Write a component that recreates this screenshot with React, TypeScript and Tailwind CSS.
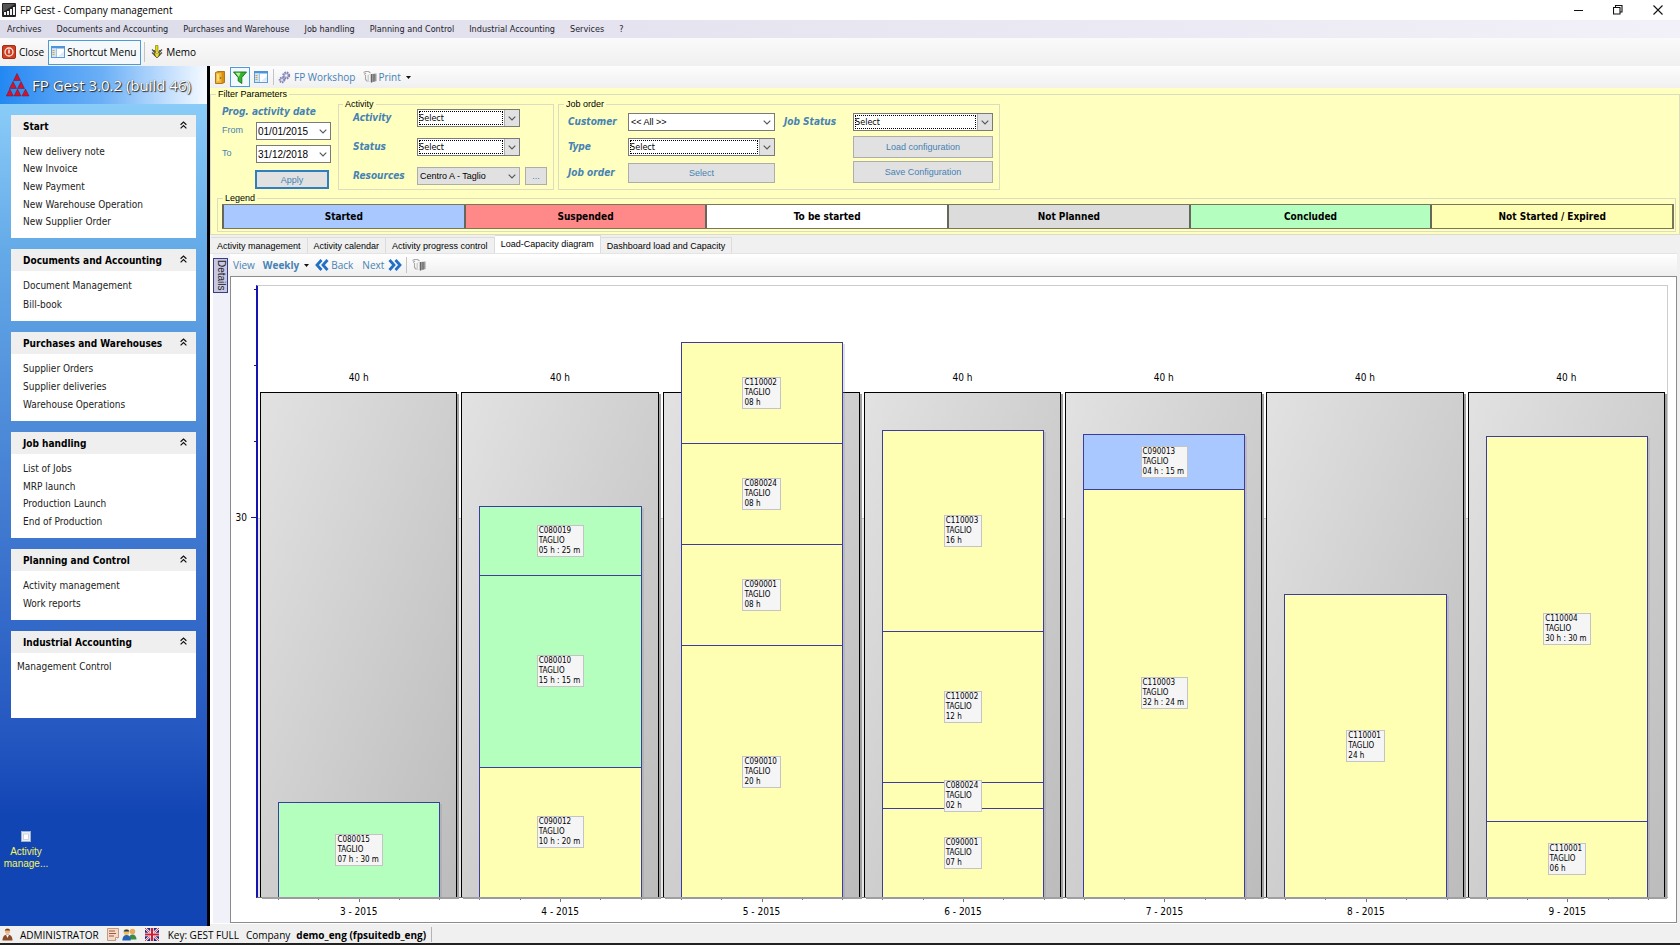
import React from "react";

const TAHOMA = "font-['DejaVu_Sans_Condensed','DejaVu_Sans',sans-serif]";
const SEGOE = "font-['Open_Sans','Noto_Sans',sans-serif]";
const SANS = "font-['Liberation_Sans',Arial,sans-serif]";

/* ---------- icons ---------- */

const AppIcon = () => (
  <svg width="14" height="14" viewBox="0 0 14 14">
    <rect width="14" height="14" rx="1" fill="#222" />
    <path d="M1 1h12L1 9z" fill="#555" />
    <path d="M2 12V9h2v3zM5 12V8h2v4zM8 12V6h2v6zM11 12V4h2v8z" fill="#f2f2f2" />
  </svg>
);
const PowerIcon = () => (
  <svg width="14" height="14" viewBox="0 0 14 14">
    <rect x=".5" y=".5" width="13" height="13" rx="1.5" fill="#cf3f22" stroke="#a52c14" />
    <circle cx="7" cy="7" r="4" fill="none" stroke="#fbe3dc" strokeWidth="1.3" />
    <path d="M7 4.6v4" stroke="#fff" strokeWidth="1.4" />
  </svg>
);
const PanelIcon = () => (
  <svg width="14" height="12" viewBox="0 0 14 12">
    <rect x=".5" y=".5" width="13" height="11" fill="#fff" stroke="#5b9bd8" />
    <rect x="0" y="0" width="14" height="2.5" fill="#4b95dd" />
    <rect x="1" y="2.5" width="4" height="8.5" fill="#cfe5f8" />
    <path d="M1.5 4.5h2M1.5 6.5h2M1.5 8.5h2" stroke="#e0a030" />
    <path d="M5.5 2v9" stroke="#9cc4ea" />
    <path d="M7 10.5h6V5z" fill="#dcebfa" />
  </svg>
);
const MemoIcon = () => (
  <svg width="12" height="14" viewBox="0 0 12 14">
    <path d="M4.500.5h2.500v6H4.500z" fill="#e8d800" stroke="#777700" strokeWidth=".6" />
    <path d="M1 4.500l4 4M11 4.500L7 8.500M1 7.500l4 4M11 7.500l-4 4" stroke="#555" strokeWidth="1.300" />
    <path d="M3 5l3 4 3-4-.5 5L6 13l-2.500-3z" fill="#d2c800" stroke="#333" strokeWidth=".7" />
    <path d="M6 6v6" stroke="#fff36b" />
  </svg>
);
const DoorIcon = () => (
  <svg width="10" height="13" viewBox="0 0 10 13">
    <path d="M.5 1.5L3 .5h6.5v11L7 12.5H.5z" fill="#d98f10" stroke="#9a6508" strokeWidth=".8" />
    <path d="M1 1.8h5.5v10H1z" fill="#f3b93a" />
    <path d="M2 3h2v7H2z" fill="#fbdc86" />
    <circle cx="5.6" cy="7" r=".8" fill="#7a4d00" />
  </svg>
);
const FunnelIcon = () => (
  <svg width="14" height="13" viewBox="0 0 14 13">
    <path d="M.5 1h13L8.8 6.5v6L5.2 10V6.5z" fill="#35b52c" stroke="#14701a" strokeWidth=".9" />
    <path d="M2.5 1.8h5L5.8 6z" fill="#b7efa8" />
  </svg>
);
const GearsIcon = () => (
  <svg width="13" height="13" viewBox="0 0 13 13">
    <circle cx="8.2" cy="4.5" r="3" fill="#b9b9dc" stroke="#8585b5" strokeWidth="2" strokeDasharray="1.5 .9" />
    <circle cx="4" cy="9" r="2.4" fill="#b9b9dc" stroke="#8585b5" strokeWidth="1.8" strokeDasharray="1.3 .8" />
    <circle cx="8.2" cy="4.5" r="1" fill="#fff" />
    <circle cx="4" cy="9" r=".8" fill="#fff" />
  </svg>
);
const PrintIcon = () => (
  <svg width="14" height="12" viewBox="0 0 14 12">
    <path d="M.5 1.500l2-1h3l2 1.500M1 3.500l2-1.500M2.500 4v4.500l2 2" fill="none" stroke="#a8a8a8" strokeWidth="1.100" />
    <path d="M4.500 4l4-1v8.500l-4-1z" fill="#cfcfcf" />
    <path d="M8.500 3l5-.500v7.500l-5 1.500z" fill="#999" />
    <path d="M6.500 4v6.500" stroke="#f5f5f5" />
    <path d="M8.500 3v8.500M11 3v7.500" stroke="#666" />
  </svg>
);
const LogoIcon = () => (
  <svg width="24" height="24" viewBox="0 0 24 24">
    <g fill="#d3122d" stroke="#5d1c3a" strokeWidth=".5">
      <path d="M11 .500l3.500 7h-7z" />
      <path d="M7 8.500l3.500 7h-7zM15 8.500l3.500 7h-7z" />
      <path d="M3.800 16l3.500 7h-7zM11.500 16l3.500 7H8zM19.500 16l3.500 7h-7z" />
    </g>
  </svg>
);
const Chevron = () => (
  <svg width="8" height="5" viewBox="0 0 8 5">
    <path d="M.7.7L4 4 7.300.7" fill="none" stroke="#555" strokeWidth="1.1" />
  </svg>
);
const Caret = () => (
  <svg width="5" height="3" viewBox="0 0 5 3">
    <path d="M0 0h5L2.500 3z" fill="#111" />
  </svg>
);
const CollapseIcon = () => (
  <svg width="7" height="8" viewBox="0 0 7 8">
    <path d="M.6 3.800L3.500 1l2.900 2.800M.6 7.400L3.500 4.600l2.900 2.800" fill="none" stroke="#111" strokeWidth="1.200" />
  </svg>
);
const DoubleArrow = ({ flip = false }: { flip?: boolean }) => (
  <svg width="14" height="12" viewBox="0 0 14 12" className={flip ? "rotate-180" : ""}>
    <path d="M6.500 1L2 6l4.500 5M12.500 1L8 6l4.500 5" fill="none" stroke="#2270c4" strokeWidth="2.800" />
  </svg>
);
const UserIcon = () => (
  <svg width="11" height="13" viewBox="0 0 11 13">
    <circle cx="5.500" cy="3.200" r="2.600" fill="#e9b68a" />
    <path d="M2.800 2.500C3 .3 8 .3 8.200 2.500z" fill="#7a3f14" />
    <path d="M.5 12.500c0-4 2-6 5-6s5 2 5 6z" fill="#8b4a25" />
    <path d="M4 6.800h3L5.500 10z" fill="#fff" />
  </svg>
);
const NoteIcon = () => (
  <svg width="12" height="13" viewBox="0 0 12 13">
    <path d="M.5.500h11v9l-3 3h-8z" fill="#f5d9c4" stroke="#b08a70" strokeWidth=".8" />
    <path d="M2 3h6M2 5.500h7M2 8h5" stroke="#9b5a48" />
    <path d="M8.500 12.500v-3h3" fill="#fff" stroke="#b08a70" strokeWidth=".8" />
  </svg>
);
const UsersIcon = () => (
  <svg width="15" height="13" viewBox="0 0 15 13">
    <circle cx="10.500" cy="3.500" r="2.700" fill="#e7a860" />
    <path d="M6.500 11.500c0-3 1.500-5 4-5s4 2 4 5z" fill="#3d8a45" />
    <circle cx="4.500" cy="4" r="2.900" fill="#f1c14e" />
    <path d="M1.700 3.500C2 .8 7 .8 7.300 3.500z" fill="#1d3c66" />
    <path d="M.3 12.500c0-3.500 1.700-5.500 4.200-5.500s4.300 2 4.300 5.500z" fill="#2563b8" />
  </svg>
);
const FlagIcon = () => (
  <svg width="14" height="13" viewBox="0 0 14 13">
    <rect width="14" height="13" fill="#1c2a7a" />
    <path d="M0 0l14 13M14 0L0 13" stroke="#fff" strokeWidth="2.200" />
    <path d="M0 0l14 13M14 0L0 13" stroke="#d01c34" strokeWidth=".9" />
    <path d="M7 0v13M0 6.500h14" stroke="#fff" strokeWidth="3.400" />
    <path d="M7 0v13M0 6.500h14" stroke="#d01c34" strokeWidth="2" />
  </svg>
);

/* ---------- data ---------- */

const MENU = ["Archives", "Documents and Accounting", "Purchases and Warehouse", "Job handling", "Planning and Control", "Industrial Accounting", "Services", "?"];

const CARDS = [
  { title: "Start", size: "h-[123px]", items: ["New delivery note", "New Invoice", "New Payment", "New Warehouse Operation", "New Supplier Order"] },
  { title: "Documents and Accounting", size: "h-[72px]", items: ["Document Management", "Bill-book"] },
  { title: "Purchases and Warehouses", size: "h-[89px]", items: ["Supplier Orders", "Supplier deliveries", "Warehouse Operations"] },
  { title: "Job handling", size: "h-[106px]", items: ["List of Jobs", "MRP launch", "Production Launch", "End of Production"] },
  { title: "Planning and Control", size: "h-[71px]", items: ["Activity management", "Work reports"] },
];

const LEGEND = [
  { label: "Started", tone: "bg-[#a8c8ff]" },
  { label: "Suspended", tone: "bg-[#ff8888]" },
  { label: "To be started", tone: "bg-white" },
  { label: "Not Planned", tone: "bg-[#dcdcdc]" },
  { label: "Concluded", tone: "bg-[#b4ffc0]" },
  { label: "Not Started / Expired", tone: "bg-[#ffffb4]" },
];

const TABS = ["Activity management", "Activity calendar", "Activity progress control", "Load-Capacity diagram", "Dashboard load and Capacity"];

const DONE = "bg-[#b4ffbe]";
const EXPIRED = "bg-[#ffffb4]";
const STARTED = "bg-[#a8c8ff]";

type Job = { code: string; time: string; hours: number; tone: string };
const WEEKS: { week: string; over?: boolean; jobs: Job[] }[] = [
  { week: "3 - 2015", jobs: [{ code: "C080015", time: "07 h : 30 m", hours: 7.5, tone: DONE }] },
  {
    week: "4 - 2015",
    jobs: [
      { code: "C080019", time: "05 h : 25 m", hours: 5.42, tone: DONE },
      { code: "C080010", time: "15 h : 15 m", hours: 15.25, tone: DONE },
      { code: "C090012", time: "10 h : 20 m", hours: 10.33, tone: EXPIRED },
    ],
  },
  {
    week: "5 - 2015",
    over: true,
    jobs: [
      { code: "C110002", time: "08 h", hours: 8, tone: EXPIRED },
      { code: "C080024", time: "08 h", hours: 8, tone: EXPIRED },
      { code: "C090001", time: "08 h", hours: 8, tone: EXPIRED },
      { code: "C090010", time: "20 h", hours: 20, tone: EXPIRED },
    ],
  },
  {
    week: "6 - 2015",
    jobs: [
      { code: "C110003", time: "16 h", hours: 16, tone: EXPIRED },
      { code: "C110002", time: "12 h", hours: 12, tone: EXPIRED },
      { code: "C080024", time: "02 h", hours: 2, tone: EXPIRED },
      { code: "C090001", time: "07 h", hours: 7, tone: EXPIRED },
    ],
  },
  {
    week: "7 - 2015",
    jobs: [
      { code: "C090013", time: "04 h : 15 m", hours: 4.25, tone: STARTED },
      { code: "C110003", time: "32 h : 24 m", hours: 32.4, tone: EXPIRED },
    ],
  },
  { week: "8 - 2015", jobs: [{ code: "C110001", time: "24 h", hours: 24, tone: EXPIRED }] },
  {
    week: "9 - 2015",
    jobs: [
      { code: "C110004", time: "30 h : 30 m", hours: 30.5, tone: EXPIRED },
      { code: "C110001", time: "06 h", hours: 6, tone: EXPIRED },
    ],
  },
];

const MAX_HOURS = 48.4;
const pct = (h: number) => `${(h / MAX_HOURS) * 100}%`;

/* ---------- controls ---------- */

const LABEL = "text-[10px] font-bold italic leading-3 text-[#4682b4] " + TAHOMA;
const BUTTON = "border border-[#adadad] bg-[#e1e1e1] text-center text-[9px] text-[#4682b4] " + SANS;

function CheckCombo({ id }: { id: string }) {
  return (
    <div className="relative h-[18px] w-full">
      <select id={id} className={"block h-full w-full appearance-none border border-[#7a7a7a] bg-white pl-px text-[9px] leading-3 text-black outline-none " + TAHOMA}>
        <option>Select</option>
      </select>
      <span className="pointer-events-none absolute inset-y-[2px] left-[2px] right-[17px] border border-dotted border-black" />
      <span className="pointer-events-none absolute inset-y-[1px] right-[1px] flex w-[15px] items-center justify-center border-l border-[#adadad] bg-[#e1e1e1]">
        <Chevron />
      </span>
    </div>
  );
}

function Combo({ id, value, grey = false }: { id: string; value: string; grey?: boolean }) {
  return (
    <div className="relative h-[18px] w-full">
      <select
        id={id}
        className={"block h-full w-full appearance-none border pl-[2px] text-[9px] leading-3 text-black outline-none " + SANS + (grey ? " border-[#adadad] bg-[#e1e1e1]" : " border-[#7a7a7a] bg-white")}
      >
        <option>{value}</option>
      </select>
      <span className="pointer-events-none absolute inset-y-0 right-[4px] flex items-center">
        <Chevron />
      </span>
    </div>
  );
}

function DateBox({ id, value }: { id: string; value: string }) {
  return (
    <div className="relative h-[18px] w-[75px]">
      <input id={id} type="text" defaultValue={value} className={"block h-full w-full border border-[#7a7a7a] bg-white pl-[1px] text-[10px] leading-4 text-black outline-none " + SANS} />
      <span className="pointer-events-none absolute inset-y-0 right-[4px] flex items-center">
        <Chevron />
      </span>
    </div>
  );
}

/* ---------- regions ---------- */

function TitleBar() {
  return (
    <header className="flex h-5 shrink-0 items-center bg-white pl-[2px]">
      <AppIcon />
      <h1 className={"ml-1 text-[10px] leading-4 text-black " + SEGOE}>FP Gest - Company management</h1>
      <div className="ml-auto flex items-center gap-[30px] pr-[17px]">
        <button aria-label="Minimize" className="flex w-[10px] justify-center">
          <svg width="9" height="9" viewBox="0 0 9 9"><path d="M0 4.500h9" stroke="#111" /></svg>
        </button>
        <button aria-label="Restore" className="flex w-[10px] justify-center">
          <svg width="10" height="10" viewBox="0 0 10 10">
            <path d="M.5 2.500h6.500v6.500H.5zM2.500 2.500v-2H9V7H7" fill="none" stroke="#111" strokeWidth="1.100" />
          </svg>
        </button>
        <button aria-label="Close window" className="flex w-[10px] justify-center">
          <svg width="10" height="10" viewBox="0 0 10 10"><path d="M.5.500l9 9M9.500.500l-9 9" stroke="#111" strokeWidth="1.100" /></svg>
        </button>
      </div>
    </header>
  );
}

function MenuBar() {
  return (
    <nav className="flex h-[18px] shrink-0 items-center gap-[15px] bg-gradient-to-r from-[#dcdbe9] to-[#f2f1f9] pl-[7px]">
      {MENU.map((m) => (
        <button key={m} className={"text-[9px] leading-4 text-[#1c1c28] " + TAHOMA}>{m}</button>
      ))}
    </nav>
  );
}

function MainToolbar() {
  return (
    <div className={"flex h-7 shrink-0 items-center bg-gradient-to-b from-[#fafafa] to-[#f0f0f0] pl-[2px] text-[10px] text-black " + SEGOE}>
      <button className="flex items-center gap-[3px]"><PowerIcon />Close</button>
      <button className="ml-[4px] flex h-[25px] w-[93px] items-center gap-[2px] whitespace-nowrap border border-[#4a9bd8] bg-[#f6f9fc] pl-[2px]">
        <PanelIcon />Shortcut Menu
      </button>
      <span className="ml-[3px] h-5 w-px bg-[#c4c4c4]" />
      <button className="ml-[6px] flex items-center gap-[3px]"><MemoIcon />Memo</button>
    </div>
  );
}

function CardHead({ title }: { title: string }) {
  return (
    <div className="flex h-[22px] shrink-0 items-center justify-between bg-[#efefef] pl-3 pr-[9px] pt-[2px]">
      <h2 className={"text-[10px] font-bold leading-3 text-black " + TAHOMA}>{title}</h2>
      <button aria-label={"Collapse " + title} className="pb-[5px]"><CollapseIcon /></button>
    </div>
  );
}

function Sidebar() {
  return (
    <aside className="flex w-[207px] shrink-0 flex-col bg-[linear-gradient(to_bottom,#8accf8_38px,#65abe8_180px,#4079d0_460px,#2457c0_670px,#1245b4_750px)]">
      <div className="flex h-[38px] shrink-0 items-center gap-[2px] bg-gradient-to-r from-[#2288f2] via-[#6cb0f6] to-[#f6faff] pl-[6px]">
        <LogoIcon />
        <span className={"whitespace-nowrap text-[15px] text-white [text-shadow:1px_1px_1px_#222,0_0_1px_#444] " + SEGOE}>FP Gest 3.0.2 (build 46)</span>
      </div>
      <div className={"flex flex-col gap-[11px] px-[11px] pt-[11px] text-[10px] leading-3 text-[#222] " + TAHOMA}>
        {CARDS.map((c) => (
          <section key={c.title} className={"flex flex-col bg-white " + c.size}>
            <CardHead title={c.title} />
            <ul className="flex flex-1 flex-col pb-[7px] pl-3 pt-[6px]">
              {c.items.map((i) => (
                <li key={i} className="flex flex-1 items-center"><a href="#">{i}</a></li>
              ))}
            </ul>
          </section>
        ))}
        <section className="flex h-[87px] flex-col bg-white">
          <CardHead title="Industrial Accounting" />
          <a href="#" className="pl-[6px] pt-2">Management Control</a>
        </section>
      </div>
      <button className={"mt-[113px] flex w-[52px] flex-col items-center text-[10px] leading-3 text-[#f4f45c] " + SANS}>
        <svg width="10" height="11" viewBox="0 0 10 11" className="mb-[4px]">
          <rect x=".5" y=".5" width="9" height="10" fill="#e8eef8" stroke="#9fb0c8" />
          <rect x="2.500" y="3" width="5" height="5.500" fill="#fff" stroke="#b8c4d6" strokeWidth=".7" />
        </svg>
        Activity<br />manage...
      </button>
    </aside>
  );
}

function FilterToolbar() {
  return (
    <div className={"flex h-[22px] shrink-0 items-center bg-gradient-to-b from-[#fdfdfd] to-[#f0f0f0] pl-[5px] text-[10px] text-[#4682b4] " + SEGOE}>
      <button aria-label="Exit"><DoorIcon /></button>
      <button aria-label="Filter" className="ml-[5px] flex h-5 w-5 items-center justify-center border border-[#4a9bd8] bg-[#f2f8fd]"><FunnelIcon /></button>
      <button aria-label="Panel" className="ml-[4px]"><PanelIcon /></button>
      <span className="ml-[5px] h-4 w-px bg-[#c4c4c4]" />
      <button className="ml-[4px] flex items-center gap-[3px]"><GearsIcon />FP Workshop</button>
      <button className="ml-[8px] flex items-center gap-px"><PrintIcon />Print<span className="ml-1"><Caret /></span></button>
    </div>
  );
}

function Filters() {
  const group = "border border-[#dcdcc0] min-w-0 ";
  const legend = "px-[2px] text-[9px] text-black " + SANS;
  const plain = "w-[34px] text-[9px] text-[#4682b4] " + SANS;
  return (
    <div className="shrink-0 bg-[#ffffbf] pt-px">
      <fieldset className={group + "pl-[6px] pr-[3px]"}>
        <legend className={legend + " -ml-px leading-[10px]"}>Filter Parameters</legend>
        <div className="flex">
          <div className="w-[117px] pl-[5px] pt-[7px]">
            <p className={LABEL}>Prog. activity date</p>
            <div className="mt-1 flex items-center"><label htmlFor="from" className={plain}>From</label><DateBox id="from" value="01/01/2015" /></div>
            <div className="mt-[5px] flex items-center"><label htmlFor="to" className={plain}>To</label><DateBox id="to" value="31/12/2018" /></div>
            <button className={"ml-[33px] mt-[7px] h-[19px] w-[74px] border-2 border-[#2f7fc0] bg-[#e1e1e1] text-[9px] leading-3 text-[#4682b4] " + SANS}>Apply</button>
          </div>
          <fieldset className={group + "ml-[4px] h-[91px] w-[216px] pl-[14px]"}>
            <legend className={legend + " -ml-[10px] leading-[10px]"}>Activity</legend>
            <div className="grid grid-cols-[64px_103px] items-center gap-y-[11px]">
              <label htmlFor="activity" className={LABEL}>Activity</label>
              <CheckCombo id="activity" />
              <label htmlFor="status" className={LABEL}>Status</label>
              <CheckCombo id="status" />
              <label htmlFor="resources" className={LABEL}>Resources</label>
              <div className="flex gap-[5px]">
                <div className="w-[103px] shrink-0"><Combo id="resources" value="Centro A - Taglio" grey /></div>
                <button aria-label="Choose resources" className={"h-[18px] w-[22px] shrink-0 leading-3 " + BUTTON}>...</button>
              </div>
            </div>
          </fieldset>
          <fieldset className={group + "ml-[4px] h-[91px] w-[442px] pl-[9px]"}>
            <legend className={legend + " -ml-[4px] leading-[10px]"}>Job order</legend>
            <div className="flex pt-[4px]">
              <div className="grid grid-cols-[60px_147px] content-start items-center gap-y-[7px]">
                <label htmlFor="customer" className={LABEL}>Customer</label>
                <Combo id="customer" value="<< All >>" />
                <label htmlFor="type" className={LABEL}>Type</label>
                <CheckCombo id="type" />
                <label htmlFor="joborder" className={LABEL}>Job order</label>
                <button id="joborder" className={"h-5 leading-3 " + BUTTON}>Select</button>
              </div>
              <label htmlFor="jobstatus" className={"ml-[9px] w-[69px] pt-[3px] " + LABEL}>Job Status</label>
              <div className="flex w-[140px] flex-col">
                <CheckCombo id="jobstatus" />
                <button className={"mt-[5px] h-[22px] leading-3 " + BUTTON}>Load configuration</button>
                <button className={"mt-[3px] h-[22px] leading-3 " + BUTTON}>Save Configuration</button>
              </div>
            </div>
          </fieldset>
        </div>
        <fieldset className={group + "mb-[2px] mt-[2px] pb-[2px] pl-[4px] pr-px"}>
          <legend className={legend + " ml-px leading-3"}>Legend</legend>
          <ul className={"flex h-[25px] border-y border-r-2 border-[#77775a] font-bold text-black " + TAHOMA}>
            {LEGEND.map((l) => (
              <li key={l.label} className={"flex flex-1 items-center justify-center border-l-2 border-[#66665a] text-[10px] " + l.tone}>{l.label}</li>
            ))}
          </ul>
        </fieldset>
      </fieldset>
    </div>
  );
}

function Tabs() {
  return (
    <div role="tablist" className={"flex h-[18px] shrink-0 items-end bg-[#f0f0f0] pl-px text-[9px] leading-3 text-black " + SANS}>
      {TABS.map((t) => {
        const on = t === "Load-Capacity diagram";
        return (
          <button
            key={t}
            role="tab"
            aria-selected={on}
            className={"whitespace-nowrap border-r border-t border-[#dcdcdc] px-[6px] " + (on ? "h-[18px] bg-white pb-[2px]" : "h-4 bg-[#f0f0f0]")}
          >
            {t}
          </button>
        );
      })}
    </div>
  );
}

function Column({ over, jobs }: { over?: boolean; jobs: Job[] }) {
  const total = jobs.reduce((s, j) => s + j.hours, 0);
  return (
    <div className="grid grid-cols-1 grid-rows-1 items-end">
      <div className="relative col-start-1 row-start-1 mx-[2px] border border-b-0 border-black bg-gradient-to-br from-[#e2e2e2] to-[#bcbcbc] shadow-[2px_2px_0_#a0a0a0]" style={{ height: pct(40) }}>
        {!over && <span className="absolute inset-x-0 -top-[21px] text-center text-[10px] leading-3">40 h</span>}
      </div>
      <div className="relative z-10 col-start-1 row-start-1 ml-[20px] mr-[19px] flex flex-col border-x border-[#3c3ca0] shadow-[2px_2px_0_#8c8c9c40]" style={{ height: pct(total) }}>
        {jobs.map((j) => (
          <div
            key={j.code}
            className={"flex min-h-0 items-center justify-center border-t border-[#3c3ca0] " + j.tone}
            style={{ flex: `${j.hours} 1 0` }}
          >
            <div className="relative z-10 shrink-0 whitespace-nowrap border border-[#c4c4c4] bg-[#f5f5f5] pl-px pr-[3px] text-[8px] leading-[10px] text-black">
              {j.code}<br />TAGLIO<br />{j.time}
            </div>
          </div>
        ))}
      </div>
    </div>
  );
}

function Chart() {
  return (
    <div className={"flex min-h-0 flex-1 flex-col border border-[#8c8c8c] bg-white pr-[8px] pt-[8px] text-black " + TAHOMA}>
      <div className="flex min-h-0 flex-1">
        <div className="relative w-[25px] shrink-0">
          <span className="absolute right-[9px] translate-y-1/2 text-[10px] leading-3" style={{ bottom: pct(30) }}>30</span>
          {[30, 36, 42, 48].map((h) => (
            <span key={h} className={"absolute right-0 h-px bg-[#1414a0] " + (h === 30 ? "w-[5px]" : "w-[2px]")} style={{ bottom: pct(h) }} />
          ))}
        </div>
        <div className="relative flex-1 border-b border-l-2 border-r border-t border-b-[#777] border-l-[#1414b4] border-r-[#ccc] border-t-[#ccc]">
          <div className="absolute inset-x-0 bottom-0 border-t border-[#c4c4c4] bg-[#e6e6e6]" style={{ height: pct(30) }} />
          <div className="relative grid h-full grid-cols-7">
            {WEEKS.map((w) => <Column key={w.week} over={w.over} jobs={w.jobs} />)}
          </div>
        </div>
      </div>
      <div className="ml-[27px] grid h-[24px] shrink-0 grid-cols-7 text-center text-[10px] leading-3">
        {WEEKS.map((w) => (
          <div key={w.week}>
            <div className="ml-[20px] mr-[19px] flex items-start justify-between">
              <i className="h-[2px] w-px bg-[#777]" />
              <i className="h-[2px] w-px bg-[#777]" />
              <i className="h-[4px] w-px bg-[#777]" />
              <i className="h-[2px] w-px bg-[#777]" />
              <i className="h-[2px] w-px bg-[#777]" />
            </div>
            <p className="pt-[4px]">{w.week}</p>
          </div>
        ))}
      </div>
    </div>
  );
}

function StatusBar() {
  return (
    <footer className={"flex h-[19px] shrink-0 items-center border-b-2 border-[#222] bg-[#f0f0f0] pl-[2px] text-[10px] leading-4 text-black " + SEGOE}>
      <UserIcon />
      <span className="ml-[7px]">ADMINISTRATOR</span>
      <span className="ml-[8px] flex items-center gap-[3px]"><NoteIcon /><UsersIcon /></span>
      <span className="ml-[8px]"><FlagIcon /></span>
      <span className="ml-[9px]">Key: GEST FULL</span>
      <span className="ml-[7px]">Company</span>
      <span className="ml-[6px] font-bold">demo_eng (fpsuitedb_eng)</span>
      <span className="ml-[5px] h-[15px] w-px bg-[#b4b4b4]" />
    </footer>
  );
}

export default function App() {
  return (
    <div className="flex h-screen flex-col overflow-hidden bg-[#f0f0f0]">
      <TitleBar />
      <MenuBar />
      <MainToolbar />
      <div className="flex min-h-0 flex-1">
        <Sidebar />
        <div className="w-[3px] shrink-0 bg-black" />
        <main className="flex min-w-0 flex-1 flex-col">
          <FilterToolbar />
          <Filters />
          <Tabs />
          <div className="mb-[2px] mr-[3px] flex min-h-0 flex-1 border-t border-[#e4e4e4] bg-white pb-px pl-[3px]">
            <div className="flex w-[17px] shrink-0 flex-col bg-[#f1f1f9] pt-[4px]">
              <button className={"h-[35px] w-[15px] border border-[#3c3c78] bg-[#c8c8e4] text-[10px] leading-3 text-[#222] [writing-mode:vertical-rl] " + SANS}>Details</button>
            </div>
            <div className="flex min-w-0 flex-1 flex-col">
              <div className={"flex h-[22px] shrink-0 items-center bg-gradient-to-b from-white to-[#efefef] pl-[3px] text-[10px] text-[#4682b4] " + SEGOE}>
                <button>View</button>
                <button className="ml-[8px] flex items-center font-bold">Weekly<span className="ml-[5px]"><Caret /></span></button>
                <button className="ml-[6px] flex items-center gap-[2px]"><DoubleArrow />Back</button>
                <button className="ml-[9px] flex items-center gap-[4px]">Next<DoubleArrow flip /></button>
                <span className="ml-[4px] h-4 w-px bg-[#c4c4c4]" />
                <button aria-label="Print chart" className="ml-[5px]"><PrintIcon /></button>
              </div>
              <Chart />
            </div>
          </div>
        </main>
      </div>
      <StatusBar />
    </div>
  );
}
